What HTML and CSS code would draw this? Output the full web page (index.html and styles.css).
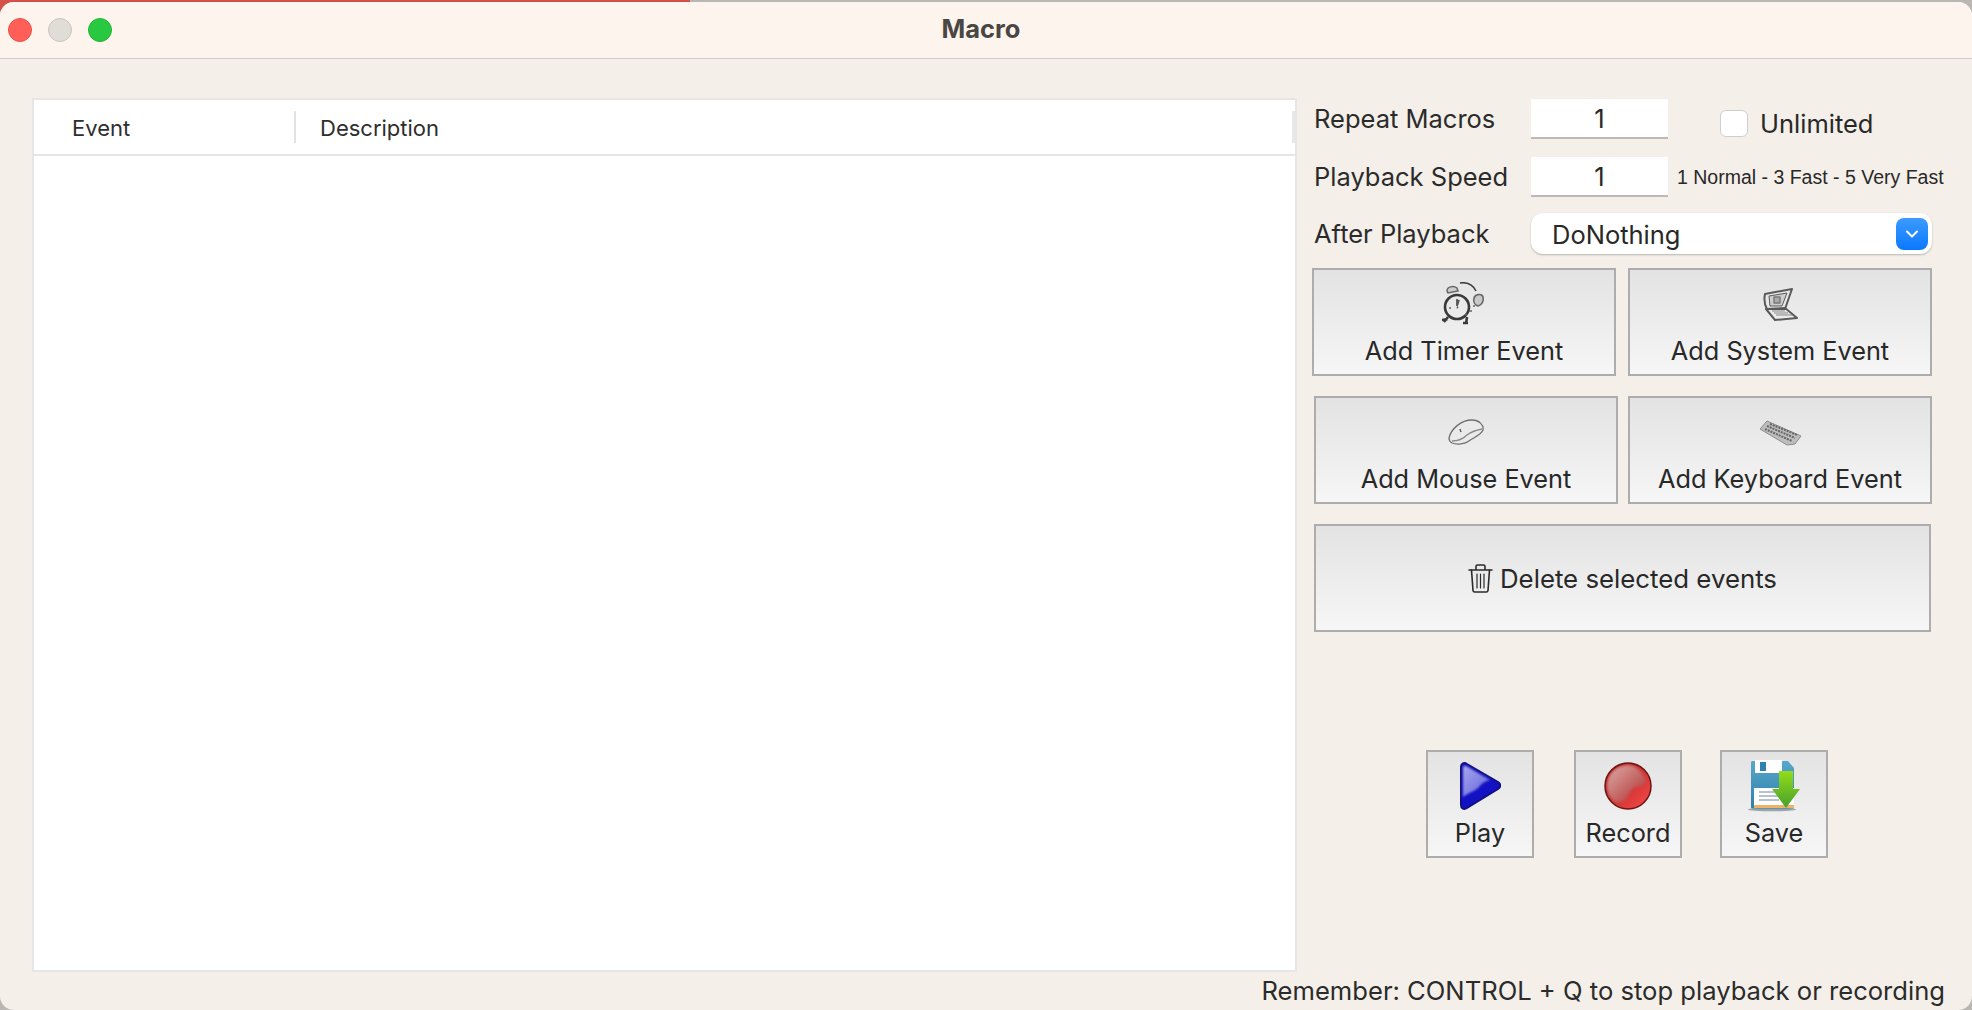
FILE: index.html
```html
<!DOCTYPE html>
<html lang="en">
<head>
<meta charset="utf-8">
<title>Macro</title>
<link rel="stylesheet" href="styles.css">
</head>
<body>
<div class="window">
  <header class="titlebar">
    <div class="lights">
      <span class="light light-close"></span>
      <span class="light light-min"></span>
      <span class="light light-max"></span>
    </div>
    <h1 class="title">Macro</h1>
  </header>
  <main class="content">
    <section class="table">
      <div class="table-head">
        <div class="col col-event">Event</div>
        <div class="col col-desc">Description</div>
        <div class="head-end"></div>
      </div>
    </section>
    <aside class="side">
      <div class="form-row row-repeat">
        <span class="label">Repeat Macros</span>
        <div class="field">1</div>
        <span class="check"></span>
        <span class="check-label">Unlimited</span>
      </div>
      <div class="form-row row-speed">
        <span class="label">Playback Speed</span>
        <div class="field">1</div>
        <span class="hint">1 Normal - 3 Fast - 5 Very Fast</span>
      </div>
      <div class="form-row row-after">
        <span class="label">After Playback</span>
        <div class="select">
          <span class="select-text">DoNothing</span>
          <span class="select-arrow">
            <svg viewBox="0 0 14 10" width="14" height="10"><path d="M2 2.5 7 7.5 12 2.5" fill="none" stroke="#fff" stroke-width="2" stroke-linecap="round" stroke-linejoin="round"/></svg>
          </span>
        </div>
      </div>
      <div class="btn-row btn-row-a">
        <button class="btn">
          <span class="slot">
            <svg class="sketch" viewBox="0 0 44 44" width="44" height="44">
              <g fill="none" stroke="#3a3a3a">
                <circle cx="15" cy="25" r="12" stroke-width="2.6"/>
                <path d="M15 17v7l2-6M15 25l1 1" stroke-width="1.8" stroke="#555"/>
                <path d="M6 35 2 40M25 35l-1 7M0 38l6-1M21 41h5" stroke-width="2.6"/>
                <path d="M18 1c7-1 13 2 16 8" stroke-width="1.6"/>
                <path d="M5 9c0-4 6-6 10-3l1 3-10 2z" stroke-width="1.5" stroke="#666" fill="#ccc"/>
                <path d="M32 16c1-4 8-5 9-1 1 4-1 8-5 9-3-1-5-4-4-8z" stroke-width="1.6" stroke="#666" fill="#c8c8c8"/>
                <path d="M27 29h3M31 24h2M7 26h2M23 32l2 1" stroke-width="1.4" stroke="#666"/>
              </g>
            </svg>
          </span>
          <span class="btn-text">Add Timer Event</span>
        </button>
        <button class="btn">
          <span class="slot">
            <svg class="sketch" viewBox="0 0 38 37" width="38" height="37">
              <g fill="none" stroke="#5a5a5a" stroke-width="1.6" stroke-linejoin="round">
                <path d="M4 8 31 3 24 23 6 23C3 18 3 13 4 8z" stroke-width="2"/>
                <path d="M8 10 26 7 21 20 9 20z" stroke-width="1" fill="#cdcdcd"/>
                <path d="M13 11h6v6h-6z" stroke-width="1.4" stroke="#777" fill="#aaa"/>
                <path d="M5 23 24 22 36 32 14 34z" stroke-width="2"/>
                <path d="M11 25 24 25M13 27 27 27M15 29 31 29" stroke-width="1.2" stroke="#888"/>
              </g>
            </svg>
          </span>
          <span class="btn-text">Add System Event</span>
        </button>
      </div>
      <div class="btn-row btn-row-b">
        <button class="btn">
          <span class="slot">
            <svg class="sketch" viewBox="0 0 36 26" width="36" height="26">
              <g fill="none" stroke="#707070" stroke-width="1.3">
                <path d="M1 19C3 10 13 1 24 1c7 0 12 5 11 10-2 5-10 8-14 11-4 3-12 4-17 2-2-1-3-3-3-5z" fill="#eaeaea"/>
                <path d="M4 22c5 0 11-2 15-6 5-4 10-5 15-6" stroke="#888"/>
                <path d="M12 10l1 3" stroke="#555"/>
              </g>
            </svg>
          </span>
          <span class="btn-text">Add Mouse Event</span>
        </button>
        <button class="btn">
          <span class="slot">
            <svg class="sketch" viewBox="0 0 43 27" width="43" height="27">
              <path d="M1 10 8 2 42 17 36 25 28 26z" fill="#bdbdbd" stroke="#8c8c8c" stroke-width="1"/>
              <path d="M8 7 36 19M6 10 33 22M11 5 38 16" fill="none" stroke="#666" stroke-width="2" stroke-dasharray="2 1"/>
            </svg>
          </span>
          <span class="btn-text">Add Keyboard Event</span>
        </button>
      </div>
      <button class="btn btn-delete">
        <svg class="trash" viewBox="0 0 25 29" width="25" height="29">
          <g fill="none" stroke="#2b2b2b" stroke-width="1.6" stroke-linecap="round" stroke-linejoin="round">
            <path d="M1 6h23M8 5V2.500C8 1.500 8.500 1 9.500 1h6c1 0 1.500.5 1.500 1.500V5"/>
            <path d="M3.500 6 5 26.500c.1 1 .7 1.500 1.700 1.500h11.600c1 0 1.600-.5 1.700-1.500L21.500 6"/>
            <path d="M9 10v14M12.500 10v14M16 10v14" stroke-width="1.200"/>
          </g>
        </svg>
        <span class="btn-text">Delete selected events</span>
      </button>
      <div class="action-row">
        <button class="btn btn-action">
          <span class="slot">
            <svg class="soft" viewBox="0 0 42 48" width="42" height="48">
              <defs>
                <linearGradient id="playHi" x1="0" y1="0" x2="1" y2="1">
                  <stop offset="0" stop-color="#a8a8ec"/>
                  <stop offset="1" stop-color="#6060dc"/>
                </linearGradient>
                <filter id="playSoft" x="-20%" y="-20%" width="140%" height="140%"><feGaussianBlur stdDeviation="0.8"/></filter>
              </defs>
              <path d="M2 5C2 1.500 5 0 8 2L39 20c3 2 3 5 0 7L8 46c-3 2-6 .5-6-3z" fill="#1212c4" stroke="#101080" stroke-width="2"/>
              <path d="M4 6c0-2 2-3 4-1.500L31 18c-5 1-8 3-11 7-3 4-10 5-16 10z" fill="url(#playHi)" filter="url(#playSoft)"/>
            </svg>
          </span>
          <span class="btn-text">Play</span>
        </button>
        <button class="btn btn-action">
          <span class="slot">
            <svg class="soft" viewBox="0 0 48 48" width="48" height="48">
              <defs>
                <linearGradient id="recBase" x1="0" y1="0" x2="1" y2="1">
                  <stop offset="0" stop-color="#a81818"/>
                  <stop offset="1" stop-color="#f84c4c"/>
                </linearGradient>
                <linearGradient id="recHi" x1="0" y1="0" x2="1" y2="1">
                  <stop offset="0" stop-color="#dcaca8"/>
                  <stop offset="1" stop-color="#b03030"/>
                </linearGradient>
                <clipPath id="recClip"><circle cx="24" cy="24" r="22"/></clipPath>
                <filter id="recSoft" x="-20%" y="-20%" width="140%" height="140%"><feGaussianBlur stdDeviation="1.6"/></filter>
              </defs>
              <circle cx="24" cy="24" r="23" fill="url(#recBase)" stroke="#6d1414" stroke-width="1.500"/>
              <g clip-path="url(#recClip)">
                <path d="M24 3C12 3 3 12 3 24c0 7 3 12 8 16 6 1 12-2 14-8 2-5 6-8 12-8 3-1 5-3 5-5C38 9 32 3 24 3z" fill="url(#recHi)" filter="url(#recSoft)"/>
              </g>
            </svg>
          </span>
          <span class="btn-text">Record</span>
        </button>
        <button class="btn btn-action">
          <span class="slot">
            <svg class="soft" viewBox="0 0 52 52" width="52" height="52">
              <defs>
                <linearGradient id="saveArrow" x1="0" y1="0" x2="0" y2="1">
                  <stop offset="0" stop-color="#93dd18"/>
                  <stop offset="1" stop-color="#46a02e"/>
                </linearGradient>
                <linearGradient id="saveBody" x1="0" y1="0" x2="0" y2="1">
                  <stop offset="0" stop-color="#58a8cc"/>
                  <stop offset="1" stop-color="#2f7fa8"/>
                </linearGradient>
              </defs>
              <ellipse cx="24" cy="49.500" rx="24" ry="1.800" fill="#9aa5aa"/>
              <path d="M3 2.500C3 1.500 3.500 1 4.500 1H40l6 7v39c0 1-.5 1.500-1.500 1.500h-40C3.500 48.500 3 48 3 47z" fill="url(#saveBody)"/>
              <path d="M7 0h27v13H7z" fill="#fff"/>
              <path d="M12 2h6v9h-6z" fill="#2f82ad"/>
              <path d="M6 28h40v17H6z" fill="#fff"/>
              <path d="M11 32h26M11 36h24M11 40h20" stroke="#a0afbf" stroke-width="1.500"/>
              <path d="M6 45h40v3H6z" fill="#eeb366"/>
              <path d="M31 11h14v18h7L38 48 24 29h7z" fill="url(#saveArrow)"/>
            </svg>
          </span>
          <span class="btn-text">Save</span>
        </button>
      </div>
    </aside>
  </main>
  <footer class="footer">Remember: CONTROL + Q to stop playback or recording</footer>
</div>
</body>
</html>
```
FILE: styles.css
```css
* { box-sizing: border-box; }
html, body { margin: 0; height: 100%; }
body {
  background: linear-gradient(#d64f4a, #d64f4a) 0 0 / 690px 16px no-repeat, #bab7b3;
  font-family: Inter, "Noto Sans", sans-serif;
  color: #282828;
  overflow: hidden;
}
.window {
  height: 1008px;
  margin-top: 2px;
  background: #f4efe9;
  border-radius: 14px;
  display: flex;
  flex-direction: column;
  overflow: hidden;
}
.titlebar {
  flex: none;
  height: 57px;
  padding-bottom: 2px;
  background: #fdf4ee;
  border-bottom: 1px solid #cfcac5;
  display: flex;
  align-items: center;
  justify-content: center;
  position: relative;
}
.lights {
  position: absolute;
  left: 8px;
  top: 16px;
  display: flex;
  gap: 16px;
}
.light { width: 24px; height: 24px; border-radius: 50%; border: 1px solid transparent; }
.light-close { background: #ff5f57; border-color: #e5534b; }
.light-min { background: #e0dcd6; border-color: #c8c4be; }
.light-max { background: #28c840; border-color: #24b539; }
.title { margin: 0 10px 0 0; font-size: 25.5px; font-weight: 700; color: #4a4643; line-height: 1; }
.content {
  flex: 1;
  min-height: 0;
  display: flex;
  gap: 16px;
  padding: 39px 40px 0 32px;
}
.table {
  flex: none;
  width: 1265px;
  background: #fff;
  border: 2px solid #e6e6e6;
}
.table-head {
  height: 56px;
  border-bottom: 2px solid #e6e6e6;
  display: flex;
  align-items: center;
  font-size: 22px;
  color: #2e2e2e;
}
.col { height: 32px; line-height: 34px; }
.col-event { width: 262px; padding-left: 38px; border-right: 2px solid #e2e2e2; }
.col-desc { flex: 1; padding-left: 24px; }
.head-end { width: 3px; height: 32px; background: #e8e8e8; }
.side { flex: 1; display: flex; flex-direction: column; }
.form-row { display: flex; align-items: center; }
.label { width: 218px; height: 40px; padding-left: 1px; font-size: 25.5px; color: #2b2b2b; flex: none; line-height: 40px; }
.field {
  width: 137px;
  height: 40px;
  background: #fff;
  border-bottom: 2px solid #bdbab6;
  text-align: center;
  font-size: 25.5px;
  line-height: 40px;
  flex: none;
}
.row-speed { margin-top: 18px; }
.row-after { margin-top: 16px; }
.check {
  width: 28px;
  height: 27px;
  margin: 10px 0 0 52px;
  background: #fff;
  border: 1px solid #cfcfcf;
  border-radius: 6px;
  flex: none;
}
.check-label { margin: 10px 0 0 12px; font-size: 25.5px; }
.hint { margin-left: 9px; font-family: "Liberation Sans", Arial, sans-serif; font-size: 19.5px; white-space: nowrap; }
.select {
  width: 401px;
  height: 41px;
  background: #fff;
  border-radius: 12px;
  box-shadow: 0 1px 2px rgba(0,0,0,.25);
  display: flex;
  align-items: center;
  justify-content: space-between;
  padding: 0 4px 0 21px;
  font-size: 25.5px;
}
.select-text { padding-top: 1px; }
.select-arrow {
  width: 32px;
  height: 32px;
  border-radius: 8px;
  background: linear-gradient(#3d9bff, #0a78ff);
  display: flex;
  align-items: center;
  justify-content: center;
}
.btn {
  width: 304px;
  height: 108px;
  padding: 12px 0 0;
  border: 2px solid #adadad;
  background: linear-gradient(#e3e3e3, #f6f6f6);
  font: inherit;
  color: inherit;
  display: flex;
  flex-direction: column;
  align-items: center;
  flex: none;
}
.btn-row { display: flex; }
.btn-row-a { margin: 14px 0 0 -1px; gap: 12px; }
.btn-row-b { margin: 20px 0 0 1px; gap: 10px; }
.slot { height: 44px; display: flex; align-items: center; justify-content: center; flex: none; }
.btn-text { font-size: 25.3px; line-height: 28px; margin-top: 11px; white-space: nowrap; }
.sketch { filter: blur(.6px); }
.soft { filter: blur(.35px); }
.btn-delete {
  width: 617px;
  margin: 20px 0 0 1px;
  flex-direction: row;
  justify-content: center;
  padding: 0;
  gap: 7px;
}
.btn-delete .btn-text { margin-top: 2px; font-size: 25.8px; }
.action-row { display: flex; margin: 118px 0 0 113px; gap: 40px; }
.btn-action { width: 108px; }
.btn-action:last-child { margin-left: -2px; }
.footer {
  flex: none;
  height: 38px;
  line-height: 38px;
  padding-right: 27px;
  text-align: right;
  font-size: 25.6px;
  color: #2b2b2b;
}
```
